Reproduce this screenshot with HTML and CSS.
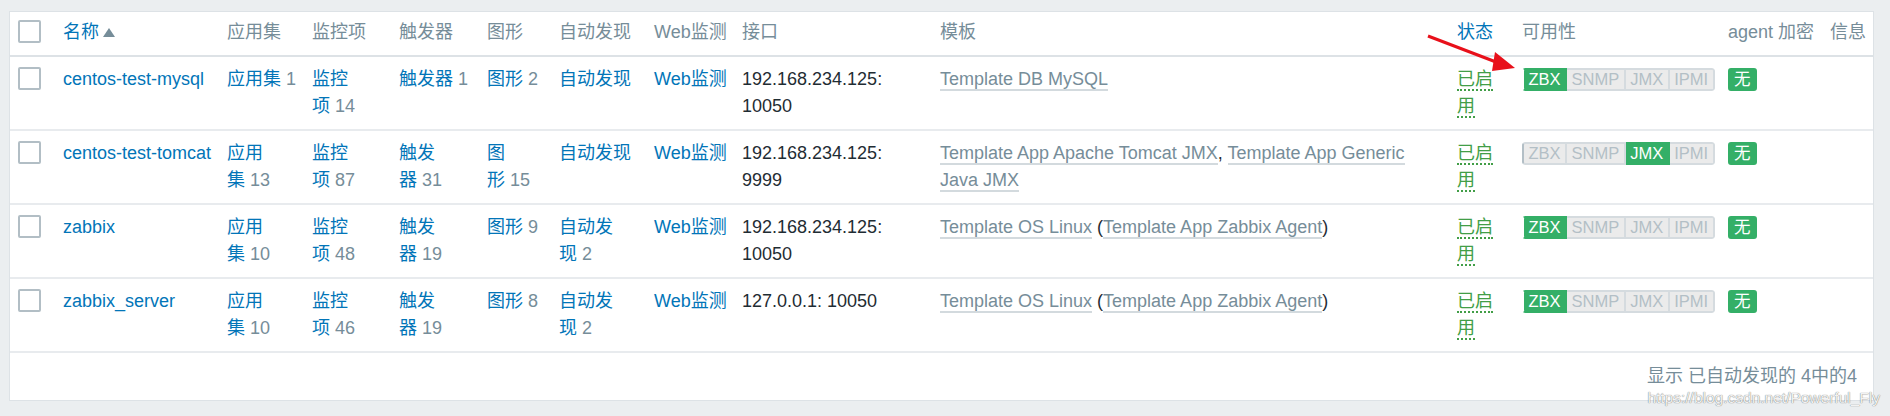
FILE: index.html
```html
<!DOCTYPE html>
<html lang="zh-CN">
<head>
    <meta charset="UTF-8">
    <meta name="viewport" content="width=device-width, initial-scale=1.0">
    <title>主机</title>
    <link rel="stylesheet" href="styles.css">
</head>
<body>

    <div class="page">
        <div class="panel">
            <table class="list-table">
                <colgroup>
                    <col class="col-check">
                    <col class="col-name">
                    <col class="col-apps">
                    <col class="col-items">
                    <col class="col-triggers">
                    <col class="col-graphs">
                    <col class="col-discovery">
                    <col class="col-web">
                    <col class="col-iface">
                    <col class="col-templates">
                    <col class="col-status">
                    <col class="col-avail">
                    <col class="col-encrypt">
                    <col class="col-info">
                </colgroup>
                <thead>
                    <tr>
                        <th class="check"><span class="checkbox"></span></th>
                        <th><a href="#">名称</a><span class="arrow-up"></span></th>
                        <th>应用集</th>
                        <th>监控项</th>
                        <th>触发器</th>
                        <th>图形</th>
                        <th>自动发现</th>
                        <th>Web监测</th>
                        <th>接口</th>
                        <th>模板</th>
                        <th><a href="#">状态</a></th>
                        <th>可用性</th>
                        <th>agent 加密</th>
                        <th>信息</th>
                    </tr>
                </thead>
                <tbody>
                    <tr>
                        <td class="check"><span class="checkbox"></span></td>
                        <td><a href="#">centos-test-mysql</a></td>
                        <td><a href="#">应用集</a>&nbsp;<span class="count">1</span></td>
                        <td><a href="#">监控项</a>&nbsp;<span class="count">14</span></td>
                        <td><a href="#">触发器</a>&nbsp;<span class="count">1</span></td>
                        <td><a href="#">图形</a>&nbsp;<span class="count">2</span></td>
                        <td><a href="#">自动发现</a></td>
                        <td><a href="#">Web监测</a></td>
                        <td>192.168.234.125: 10050</td>
                        <td><a class="tpl" href="#">Template DB MySQL</a></td>
                        <td><a class="enabled" href="#">已启用</a></td>
                        <td>
                            <span class="status-group"><span class="status green">ZBX</span><span class="status grey">SNMP</span><span class="status grey">JMX</span><span class="status grey">IPMI</span></span>
                        </td>
                        <td><span class="status green single">无</span></td>
                        <td></td>
                    </tr>
                    <tr>
                        <td class="check"><span class="checkbox"></span></td>
                        <td><a href="#">centos-test-tomcat</a></td>
                        <td><a href="#">应用集</a>&nbsp;<span class="count">13</span></td>
                        <td><a href="#">监控项</a>&nbsp;<span class="count">87</span></td>
                        <td><a href="#">触发器</a>&nbsp;<span class="count">31</span></td>
                        <td><a href="#">图形</a>&nbsp;<span class="count">15</span></td>
                        <td><a href="#">自动发现</a></td>
                        <td><a href="#">Web监测</a></td>
                        <td>192.168.234.125: 9999</td>
                        <td><a class="tpl" href="#">Template App Apache Tomcat JMX</a>, <a class="tpl" href="#">Template App Generic Java JMX</a></td>
                        <td><a class="enabled" href="#">已启用</a></td>
                        <td>
                            <span class="status-group"><span class="status grey">ZBX</span><span class="status grey">SNMP</span><span class="status green">JMX</span><span class="status grey">IPMI</span></span>
                        </td>
                        <td><span class="status green single">无</span></td>
                        <td></td>
                    </tr>
                    <tr>
                        <td class="check"><span class="checkbox"></span></td>
                        <td><a href="#">zabbix</a></td>
                        <td><a href="#">应用集</a>&nbsp;<span class="count">10</span></td>
                        <td><a href="#">监控项</a>&nbsp;<span class="count">48</span></td>
                        <td><a href="#">触发器</a>&nbsp;<span class="count">19</span></td>
                        <td><a href="#">图形</a>&nbsp;<span class="count">9</span></td>
                        <td><a href="#">自动发现</a>&nbsp;<span class="count">2</span></td>
                        <td><a href="#">Web监测</a></td>
                        <td>192.168.234.125: 10050</td>
                        <td><a class="tpl" href="#">Template OS Linux</a> (<a class="tpl" href="#">Template App Zabbix Agent</a>)</td>
                        <td><a class="enabled" href="#">已启用</a></td>
                        <td>
                            <span class="status-group"><span class="status green">ZBX</span><span class="status grey">SNMP</span><span class="status grey">JMX</span><span class="status grey">IPMI</span></span>
                        </td>
                        <td><span class="status green single">无</span></td>
                        <td></td>
                    </tr>
                    <tr>
                        <td class="check"><span class="checkbox"></span></td>
                        <td><a href="#">zabbix_server</a></td>
                        <td><a href="#">应用集</a>&nbsp;<span class="count">10</span></td>
                        <td><a href="#">监控项</a>&nbsp;<span class="count">46</span></td>
                        <td><a href="#">触发器</a>&nbsp;<span class="count">19</span></td>
                        <td><a href="#">图形</a>&nbsp;<span class="count">8</span></td>
                        <td><a href="#">自动发现</a>&nbsp;<span class="count">2</span></td>
                        <td><a href="#">Web监测</a></td>
                        <td>127.0.0.1: 10050</td>
                        <td><a class="tpl" href="#">Template OS Linux</a> (<a class="tpl" href="#">Template App Zabbix Agent</a>)</td>
                        <td><a class="enabled" href="#">已启用</a></td>
                        <td>
                            <span class="status-group"><span class="status green">ZBX</span><span class="status grey">SNMP</span><span class="status grey">JMX</span><span class="status grey">IPMI</span></span>
                        </td>
                        <td><span class="status green single">无</span></td>
                        <td></td>
                    </tr>
                </tbody>
            </table>
            <div class="paging">显示 已自动发现的 4中的4</div>
        </div>

        <!-- annotation arrow drawn over the screenshot -->
        <svg class="red-arrow" width="100" height="45" viewBox="0 0 100 45">
            <line x1="8" y1="6" x2="76" y2="32" stroke="#e8101a" stroke-width="3"/>
            <polygon points="95,38 75,22 72,41" fill="#e8101a"/>
        </svg>

        <div class="watermark">https://blog.csdn.net/Powerful_Fly</div>
    </div>

</body>
</html>
```

FILE: styles.css
```css
/* General Styles */
html, body {
    margin: 0;
    padding: 0;
    overflow: hidden;
}

body {
    font-family: 'Liberation Sans', 'Noto Sans CJK SC', sans-serif;
    font-size: 18px;
    line-height: 27px;
    color: #1f2c33;
    background-color: #ebeef0;
}

a {
    color: #0275b8;
    text-decoration: none;
}

.page {
    position: relative;
    height: 416px;
    padding: 11px 16px 0 9px;
    box-sizing: border-box;
}

/* Panel */
.panel {
    background: #fff;
    border: 1px solid #dde2e6;
    width: 1863px;
}

/* Host table */
.list-table {
    width: 1863px;
    table-layout: fixed;
    border-collapse: separate;
    border-spacing: 0;
}

.col-check { width: 46px; }
.col-name { width: 164px; }
.col-apps { width: 85px; }
.col-items { width: 87px; }
.col-triggers { width: 88px; }
.col-graphs { width: 72px; }
.col-discovery { width: 95px; }
.col-web { width: 88px; }
.col-iface { width: 198px; }
.col-templates { width: 517px; }
.col-status { width: 65px; }
.col-avail { width: 206px; }
.col-encrypt { width: 102px; }
.col-info { width: 50px; }

.list-table th,
.list-table td {
    text-align: left;
    vertical-align: top;
    padding: 9px 7px;
}

.list-table th {
    padding: 7px 7px 9px;
    font-weight: normal;
    color: #768d99;
    border-bottom: 2px solid #dde2e6;
    white-space: nowrap;
}

.list-table td {
    border-bottom: 2px solid #e8ebee;
}

.list-table .check {
    padding-left: 8px;
}

.checkbox {
    display: block;
    width: 19px;
    height: 19px;
    margin-top: 1px;
    border: 2px solid #b2bec5;
    border-radius: 2px;
    background: #fff;
}

.arrow-up {
    display: inline-block;
    width: 0;
    height: 0;
    margin-left: 4px;
    border-left: 6px solid transparent;
    border-right: 6px solid transparent;
    border-bottom: 9px solid #768d99;
    vertical-align: 1px;
}

.count {
    color: #768d99;
}

.tpl {
    color: #768d99;
    border-bottom: 2px solid #d3dade;
}

.enabled {
    color: #429e47;
    border-bottom: 2px dotted #429e47;
}

/* Availability badges */
.status-group {
    display: inline-flex;
    vertical-align: top;
    margin-top: 2px;
    border-radius: 3px;
    overflow: hidden;
}

.status {
    display: inline-block;
    font-size: 16.5px;
    line-height: 19px;
    padding: 0 4.5px;
    border: 2px solid;
    border-left: none;
}

.status-group .status:first-child {
    border-left: 2px solid;
    border-radius: 3px 0 0 3px;
}

.status-group .status:last-child {
    border-radius: 0 3px 3px 0;
}

.status.green {
    background: #34af67;
    border-color: #34af67;
    color: #fff;
}

.status.grey {
    background: #ebebeb;
    border-color: #d5dbdf;
    color: #b3bfc6;
}

.status.single {
    vertical-align: top;
    margin-top: 2px;
    padding: 0 4px;
    border-left: 2px solid #34af67;
    border-radius: 3px;
}

/* Footer */
.paging {
    text-align: right;
    padding: 10px 16px 10px;
    color: #768d99;
}

/* Overlays */
.red-arrow {
    position: absolute;
    left: 1420px;
    top: 30px;
}

.watermark {
    position: absolute;
    right: 10px;
    bottom: 9px;
    font-size: 15.5px;
    line-height: 18px;
    color: #f2f2f2;
    text-shadow: 0 0 1px rgba(0, 0, 0, 0.45), 0 0 1px rgba(0, 0, 0, 0.3);
}
```
